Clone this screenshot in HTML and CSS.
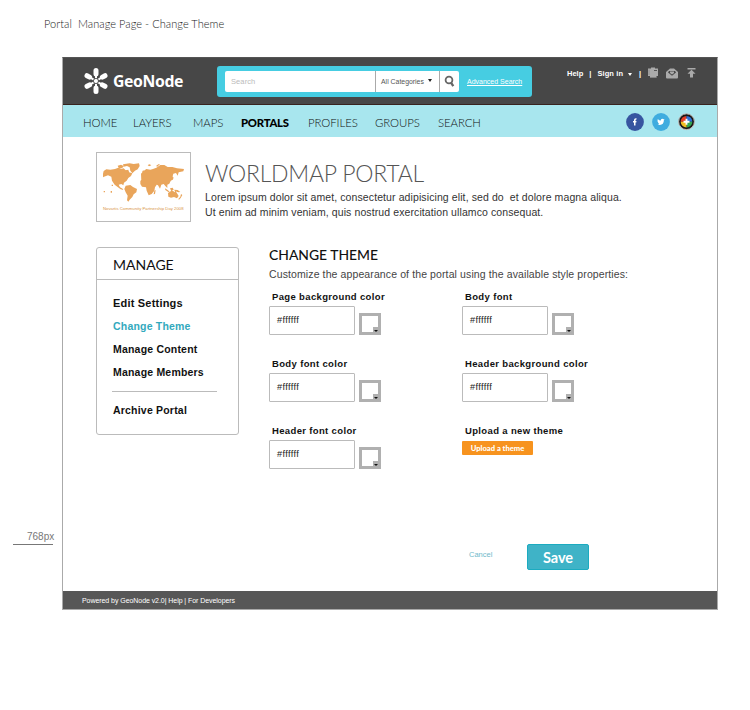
FILE: index.html
```html
<!DOCTYPE html>
<html lang="en">
<head>
<meta charset="utf-8">
<title>Portal Manage Page - Change Theme</title>
<link rel="stylesheet" href="styles.css">
</head>
<body>
<h1 class="caption">Portal&nbsp; Manage Page - Change Theme</h1>
<div class="stage">
  <aside class="gutter"><span class="fold">768px</span></aside>
  <div class="frame">
    <header class="top">
      <a class="brand">
        <svg class="logo" viewBox="0 0 26 28" width="26" height="28" fill="#fff" stroke="#fff" stroke-linecap="round">
          <g stroke-width="5"><path d="M13 3.500V7M13 21v3.500"/><path d="M4 8.700l2.600 1.400M19.400 17.900l2.600 1.400M22 8.700l-2.600 1.400M6.600 17.900L4 19.300"/></g>
          <g stroke-width="2"><path d="M13 7v14M6.600 10.200l12.800 7.600M19.400 10.200L6.600 17.800"/></g>
          <circle cx="13" cy="14" r="2.600" stroke="#474747" stroke-width=".9"/>
        </svg>
        <span class="brand-name">GeoNode</span>
      </a>
      <form class="search">
        <div class="search-box">
          <span class="query">Search</span>
          <span class="category">All Categories<i class="caret"></i></span>
          <span class="go"><svg viewBox="0 0 12 13" width="12" height="13" fill="none" stroke="#666" stroke-width="1.800"><circle cx="5" cy="5" r="3.400"/><path d="M7 7.600l2.300 3.600" stroke-width="2.300"/></svg></span>
        </div>
        <a class="advanced">Advanced Search</a>
      </form>
      <div class="account">
        <span class="help">Help</span><span class="bar">|</span><span class="signin">Sign in</span><i class="caret light"></i><span class="bar">|</span>
        <svg class="u1" viewBox="0 0 12 12" width="12" height="12" fill="#aaa"><path d="M1 1.500h3V.6h4v.9h3v7.500H9.500v1.500H3V9H1z"/><path d="M7 3.500h3" stroke="#555"/><path d="M2 2.500v5.500M3 10.500h6.500" stroke="#888" stroke-width=".8"/></svg>
        <svg class="u2" viewBox="0 0 12 11" width="12" height="11"><path d="M0 4l4-3.500h4L12 4v5.500q0 1-1 1H1q-1 0-1-1z" fill="#aaa"/><path d="M2 4.500l4 3.300 4-3.300L9 3H3z" fill="#474747"/><path d="M4 3.500h4v1.500L6 6.500 4 5z" fill="#aaa"/></svg>
        <svg class="u3" viewBox="0 0 9 10" width="9" height="10" fill="#aaa"><path d="M.5 0h8v1.500h-8zM4.500 1.800l4 4H6V9.500H3V5.800H.5z"/></svg>
      </div>
    </header>
    <nav class="nav">
      <a class="n1">HOME</a><a class="n2">LAYERS</a><a class="n3">MAPS</a><a class="n4">PORTALS</a><a class="n5">PROFILES</a><a class="n6">GROUPS</a><a class="n7">SEARCH</a>
      <div class="social">
        <svg viewBox="0 0 18 18" width="18" height="18"><circle cx="9" cy="9" r="8.900" fill="#3755a0"/><path d="M8 12.500V9.500H7V8h1V7q0-2 2.500-1.700v1.300Q9.500 6.500 9.500 7.300V8h1l-.2 1.500h-.8v3z" fill="#fff"/></svg>
        <svg viewBox="0 0 18 18" width="18" height="18"><circle cx="9" cy="9" r="8.900" fill="#3facdf"/><path d="M5.800 6q1.300 1.600 3 1.600Q8.700 5.700 10.400 5.800l1 .4 1.200-.3-.7 1.200Q11.800 12 7.800 12q-1.300 0-2.200-.7 1.200 0 1.700-.5-1.200-.3-1.400-1.200h.6Q5.600 9 5.500 8z" fill="#fff"/></svg>
        <svg viewBox="0 0 18 18" width="18" height="18"><circle cx="8.500" cy="8.700" r="7.900" fill="#181818" stroke="#c4bcb8"/><g transform="translate(-.5 -.3)"><path d="M9 9H3.200A5.800 5.800 0 0 1 9 3.200z" fill="#e43d26"/><path d="M9 9V3.200A5.800 5.800 0 0 1 14.800 9z" fill="#2d70d5"/><path d="M9 9h5.800A5.800 5.800 0 0 1 9 14.800z" fill="#32a552"/><path d="M9 9v5.800A5.800 5.800 0 0 1 3.200 9z" fill="#f2bd22"/><path d="M9 6v6M6 9h6" stroke="#fff" stroke-width="1.900"/></g></svg>
      </div>
    </nav>
    <section class="portal">
      <figure class="thumb">
        <svg class="map" viewBox="24 36 246 120" width="82" height="40" fill="#e9a55b">
          <path d="M26 60l8-5 12 1 14-2 10-4 8 4 8-2 6 6 8-2 2 8 10 3-4 8-8 6-5 8-8 6-2 8-6-4-8 2 4 8 8 4 2 4-8-2-10-8-8-6-8-12-2-12-10-4-12 4-6 4z"/>
          <path d="M68 44l10-3 8 4-4 6-10 2zM84 40l20-3 12 2 16-2 2 8-6 10-8 4-8 8-6-8-2-10-8-4-10 2zM90 58l10 2 4 8-8 0zM92 104l14-2 8 6 12 6-2 10-8 6-4 8-8 8-4 6-4-4 2-14-6-10-4-10z"/>
          <path d="M136 90l8-9 16 0 12 4 8 12 8 0-8 12-2 10-8 10-9 4-6-14-2-10-12-2-5-8zM138 68l8-8 8-6 12 2 8-2 10-4 12-8 12 0 10 6 14 0 14 4 21 2-2 7-14 3-3 10-5-8-8 2-2 8 2 8-8 6-4 8-6 3 0 10-6-6-5-6-7 2-4 12-6-10-8-4-12-2-8-5-8-3-6 5-8-2z"/>
          <path d="M178 119l4-2-2 12-4 1zM142 60l4-2 2 8-5 2zM210 112l8 5 6 5-4 1-9-6zM225 112l8-2 3 6-7 5zM238 116l10 1 8 6-6 1-11-4zM229 87l3-7 4-2-3 8zM219 126l9-6 7 0 3 4 3-5 5 8 5 8-5 7-9-4-9 2-8-3zM258 129l4 3-5 9-5 5-2-2 6-7zM158 42l6-2 5 3-7 3zM183 45l7-5 5-1-8 8zM26 120h4v4h-4zM47 120h4v5h-4zM50 101h4v4h-4z"/>
        </svg>
        <figcaption>Novartis Community Partnership Day 2008</figcaption>
      </figure>
      <div class="intro">
        <h2>WORLDMAP PORTAL</h2>
        <p class="l1">Lorem ipsum dolor sit amet, consectetur adipisicing elit, sed do&nbsp; et dolore magna aliqua.</p>
        <p class="l2">Ut enim ad minim veniam, quis nostrud exercitation ullamco consequat.</p>
      </div>
    </section>
    <main class="content">
      <aside class="manage">
        <h3>MANAGE</h3>
        <ul>
          <li class="m1">Edit Settings</li><li class="active">Change Theme</li><li>Manage Content</li><li>Manage Members</li>
        </ul>
        <p class="archive">Archive Portal</p>
      </aside>
      <section class="theme">
        <h3>CHANGE THEME</h3>
        <p class="lead">Customize the appearance of the portal using the available style properties:</p>
        <div class="fields">
          <div class="field"><label>Page background color</label><div class="control"><span class="value">#ffffff</span><i class="swatch"></i></div></div>
          <div class="field"><label>Body font</label><div class="control"><span class="value">#ffffff</span><i class="swatch"></i></div></div>
          <div class="field"><label>Body font color</label><div class="control"><span class="value">#ffffff</span><i class="swatch"></i></div></div>
          <div class="field"><label>Header background color</label><div class="control"><span class="value">#ffffff</span><i class="swatch"></i></div></div>
          <div class="field"><label>Header font color</label><div class="control"><span class="value">#ffffff</span><i class="swatch"></i></div></div>
          <div class="field"><label>Upload a new theme</label><a class="upload">Upload a theme</a></div>
        </div>
        <div class="actions"><a class="cancel">Cancel</a><a class="save">Save</a></div>
      </section>
    </main>
    <footer>Powered by GeoNode v2.0| Help | For Developers</footer>
  </div>
</div>
</body>
</html>
```
FILE: styles.css
```css
* { box-sizing: border-box; margin: 0; padding: 0; }
body { width: 750px; height: 710px; overflow: hidden; background: #fff; color: #222; font-family: "Liberation Sans", Arial, sans-serif; white-space: nowrap; }
svg { display: block; flex: none; }
.caption { height: 57px; padding: 17px 0 0 44px; font: 300 11px/14px Lato, sans-serif; letter-spacing: .05px; color: #222; }
.stage { display: flex; }
.gutter { width: 62px; padding: 472px 0 0 13px; }
.fold { display: block; width: 40px; height: 16px; padding-left: 14px; border-bottom: 1px solid #777; font-size: 10px; line-height: 15px; color: #777; }
.frame { display: flex; flex-direction: column; width: 656px; height: 553px; border: 1px solid #aaa; border-top-color: #555; }
.top { display: flex; height: 47px; background: #474747; border-bottom: 1px solid #38231f; }
.brand { display: flex; width: 154px; padding: 9px 0 0 20px; }
.brand-name { margin-left: 4px; font: 700 15.800px/28px "Noto Sans", sans-serif; letter-spacing: -.4px; color: #fff; }
.search { display: flex; align-items: center; width: 315px; height: 31px; margin-top: 8px; padding-left: 8px; border-radius: 3px; background: #46cde2; }
.search-box { display: flex; width: 234px; height: 21px; border-radius: 2px; background: #fff; line-height: 21px; }
.query { width: 150px; padding-left: 6px; font-size: 7.500px; color: #bbb; letter-spacing: .1px; }
.category { display: flex; width: 64px; padding-left: 5px; border-left: 1px solid #aaa; font-size: 6.900px; line-height: 22px; color: #555; }
.caret { width: 0; height: 0; margin: 8px 0 0 4px; border: 2.500px solid transparent; border-top: 3px solid #222; border-bottom: 0; }
.go { padding: 4px 0 0 4px; border-left: 1px solid #aaa; }
.advanced { margin-left: 8px; font-size: 7px; color: #fff; text-decoration: underline; }
.account { display: flex; padding: 9px 0 0 35px; font-size: 7.500px; line-height: 13px; font-weight: 700; color: #fff; }
.bar { margin: 0 6px; }
.signin { letter-spacing: .1px; }
.light { margin: 6px 0 0 5px; border-top-color: #fff; }
.light + .bar { margin-left: 7px; }
.u2 { margin: 1px 0 0 7px; }
.u3 { margin: 1px 0 0 9px; }
.nav { display: flex; height: 32px; background: #a8e6ee; font: 300 11.400px/35px Lato, sans-serif; letter-spacing: -.08px; color: #111; }
.nav a { flex: none; }
.n1 { width: 50px; margin-left: 20px; }
.n2 { width: 60px; }
.n3 { width: 48px; }
.n4 { width: 67px; font-size: 11.300px; font-weight: 900; letter-spacing: -.25px; color: #000; }
.n5 { width: 67px; }
.n6 { width: 63px; }
.n7 { width: 70px; }
.social { display: flex; gap: 8px; margin: 8px 0 0 118px; }
.portal { display: flex; height: 110px; padding: 15px 0 0 33px; }
.thumb { width: 95px; height: 70px; padding: 10px 0 0 6px; border: 1px solid #bbb; }
.thumb figcaption { margin-top: 2px; padding-right: 6px; font-size: 4.250px; line-height: 7px; color: #d99647; }
.intro { margin-left: 14px; }
.intro h2 { height: 37px; font: 300 23px/42px Lato, sans-serif; letter-spacing: -.25px; color: #555; }
.intro p { font-size: 10.500px; line-height: 15px; letter-spacing: .1px; color: #333; }
.intro .l1 { line-height: 16px; }
.content { display: flex; height: 344px; padding-left: 33px; }
.manage { width: 143px; height: 188px; border: 1px solid #bbb; border-radius: 3px; color: #111; }
.manage h3 { height: 32px; padding-left: 16px; border-bottom: 1px solid #bbb; font: 400 14px/34px Lato, sans-serif; }
.manage ul { margin: 12px 21px 0 15px; padding: 0 0 7px 1px; border-bottom: 1px solid #bbb; list-style: none; }
.manage li, .archive { height: 23px; font-size: 10.500px; line-height: 23px; font-weight: 700; letter-spacing: .2px; }
.manage .m1 { font-size: 11px; }
.archive { margin: 7px 0 0 16px; }
.manage .active { color: #32a9bd; }
.theme { margin-left: 30px; }
.theme h3 { height: 20px; font: 500 13.900px/16px Lato, sans-serif; color: #111; }
.lead { height: 22px; font-size: 10.500px; line-height: 14px; letter-spacing: .11px; color: #444; }
.fields { display: grid; grid-template-columns: 193px 193px; grid-auto-rows: 67px; }
.field label { display: block; height: 17px; padding-left: 3px; font-size: 9.500px; line-height: 16px; font-weight: 700; letter-spacing: .35px; color: #111; }
.control { display: flex; }
.value { width: 86px; height: 29px; padding-left: 7px; border: 1px solid #bbb; border-radius: 1px; font-size: 9.200px; line-height: 27px; letter-spacing: .35px; }
.swatch { position: relative; width: 22px; height: 22px; margin: 7px 0 0 4px; border: 3px solid #b0b0b0; background: #fff; }
.swatch::before { content: ""; position: absolute; right: 0; bottom: 0; width: 5px; height: 5px; background: #b0b0b0; }
.swatch::after { content: ""; position: absolute; right: 0; bottom: 0; border: 2px solid transparent; border-top-color: #111; border-bottom: 0; }
.upload { display: block; width: 71px; height: 14px; margin-top: 1px; border-radius: 1px; background: #f7931e; color: #fff; font: 900 7.600px/14px Lato, sans-serif; text-align: center; }
.field label:has(+ .upload) { line-height: 15px; }
.actions { display: flex; margin-top: 54px; }
.cancel { width: 58px; margin-left: 200px; font-size: 7.500px; line-height: 22px; color: #70b9ca; }
.save { width: 62px; height: 26px; border: 1px solid #1cabc0; border-radius: 2px; background: #3fb3c7; color: #fff; font: 700 14.500px/25px Lato, sans-serif; text-align: center; }
footer { margin-top: auto; height: 18px; padding-left: 19px; background: #575757; font-size: 7px; line-height: 19px; letter-spacing: -.06px; color: #fff; }
```
